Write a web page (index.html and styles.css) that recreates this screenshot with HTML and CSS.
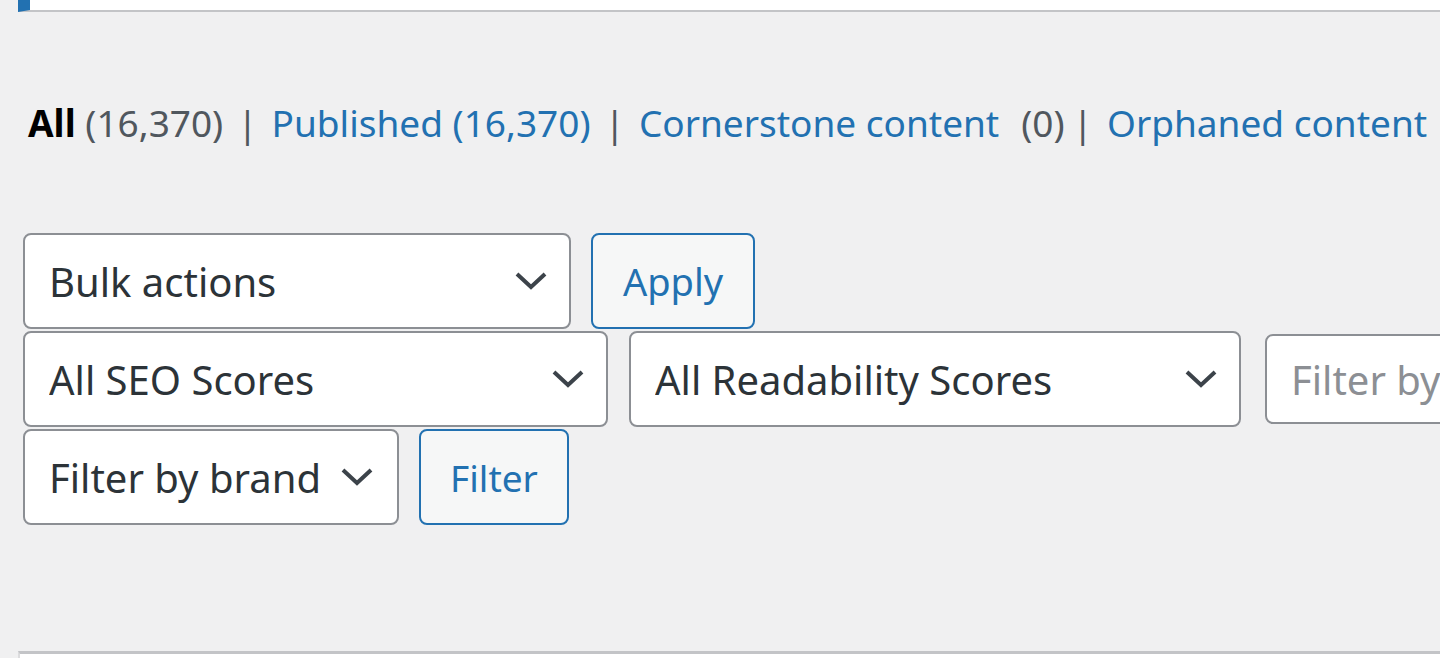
FILE: index.html
```html
<!doctype html>
<html lang="en">
	<head>
		<meta charset="utf-8" />
		<title>Posts</title>
		<link rel="stylesheet" href="styles.css">
	</head>
	<body>
		<div class="notice"></div>

		<ul class="subsubsub">
			<li class="all"><strong>All</strong> <span class="count">(16,370)</span></li>
			<li><span class="sep">|</span><a href="#">Published <span class="count">(16,370)</span></a></li>
			<li><span class="sep">|</span><a href="#">Cornerstone content</a><span class="count plain">(0)</span></li>
			<li><span class="sep tight">|</span><a href="#">Orphaned content</a></li>
		</ul>

		<div class="tablenav">
			<div class="actions">
				<label class="select w-bulk">
					<select>
						<option>Bulk actions</option>
					</select>
					<svg class="chevron" viewBox="0 0 32 18"><path d="M2 2 L16 15 L30 2" /></svg>
				</label>
				<button class="button">Apply</button>
			</div>
			<div class="actions">
				<label class="select w-seo">
					<select>
						<option>All SEO Scores</option>
					</select>
					<svg class="chevron" viewBox="0 0 32 18"><path d="M2 2 L16 15 L30 2" /></svg>
				</label>
				<label class="select w-read">
					<select>
						<option>All Readability Scores</option>
					</select>
					<svg class="chevron" viewBox="0 0 32 18"><path d="M2 2 L16 15 L30 2" /></svg>
				</label>
				<input type="text" class="text-filter" placeholder="Filter by category" />
			</div>
			<div class="actions">
				<label class="select w-brand">
					<select>
						<option>Filter by brand</option>
					</select>
					<svg class="chevron" viewBox="0 0 32 18"><path d="M2 2 L16 15 L30 2" /></svg>
				</label>
				<button class="button w-filter">Filter</button>
			</div>
		</div>

		<div class="table-top"></div>
	</body>
</html>
```

FILE: styles.css
```css
body {
	margin: 0;
	background-color: #f0f0f1;
	font-family: "Noto Sans", "Open Sans", sans-serif;
	font-size: 37px;
	color: #3c434a;
	overflow: hidden;
}

.notice {
	height: 10px;
	margin-left: 18px;
	background-color: #fff;
	border-left: 12px solid #2271b1;
	border-bottom: 2px solid #c3c4c7;
}

.subsubsub {
	list-style: none;
	margin: 88px 0 0 28px;
	padding: 0;
	display: flex;
	white-space: nowrap;
	line-height: 46px;
	color: #50575e;
}

.subsubsub strong {
	color: #000;
}

.subsubsub a {
	color: #2271b1;
	text-decoration: none;
}

.subsubsub .count {
	color: #50575e;
}

.subsubsub a .count {
	color: #2271b1;
}

.subsubsub .plain {
	margin-left: 22px;
}

.subsubsub .sep {
	margin: 0 14px;
}

.subsubsub .sep.tight {
	margin: 0 14px 0 8px;
}

.tablenav {
	margin: 87px 0 0 23px;
	display: flex;
	flex-direction: column;
	gap: 2px;
}

.actions {
	display: flex;
	align-items: center;
	gap: 20px;
	white-space: nowrap;
}

.select {
	position: relative;
	display: block;
	flex: none;
}

.select select {
	display: block;
	width: 100%;
	height: 96px;
	margin: 0;
	padding: 0 70px 0 24px;
	box-sizing: border-box;
	appearance: none;
	-webkit-appearance: none;
	font: inherit;
	font-size: 40px;
	color: #2c3338;
	background-color: #fff;
	border: 2px solid #8c8f94;
	border-radius: 8px;
}

.chevron {
	position: absolute;
	right: 24px;
	top: 39px;
	width: 32px;
	height: 18px;
	pointer-events: none;
}

.chevron path {
	fill: none;
	stroke: #3c434a;
	stroke-width: 4;
}

.w-bulk {
	width: 548px;
}

.w-seo {
	width: 585px;
}

.w-read {
	width: 612px;
	margin-left: 1px;
}

.w-brand {
	width: 376px;
}

.w-brand select {
	padding-right: 60px;
}

.w-brand .chevron {
	right: 26px;
}

.button {
	flex: none;
	width: 164px;
	height: 96px;
	margin: 0;
	padding: 0;
	font: inherit;
	font-size: 38px;
	color: #2271b1;
	background-color: #f6f7f7;
	border: 2px solid #2271b1;
	border-radius: 8px;
}

.w-filter {
	width: 150px;
	font-size: 37px;
}

.text-filter {
	flex: none;
	width: 400px;
	height: 90px;
	margin: 0 0 0 4px;
	padding: 0 24px;
	box-sizing: border-box;
	font: inherit;
	font-size: 40px;
	color: #2c3338;
	background-color: #fff;
	border: 2px solid #8c8f94;
	border-radius: 8px;
}

.text-filter::placeholder {
	color: #8c8f94;
}

.table-top {
	margin: 126px 0 0 18px;
	height: 20px;
	background-color: #fff;
	border-top: 3px solid #c3c4c7;
	border-left: 2px solid #dcdcde;
}
```
